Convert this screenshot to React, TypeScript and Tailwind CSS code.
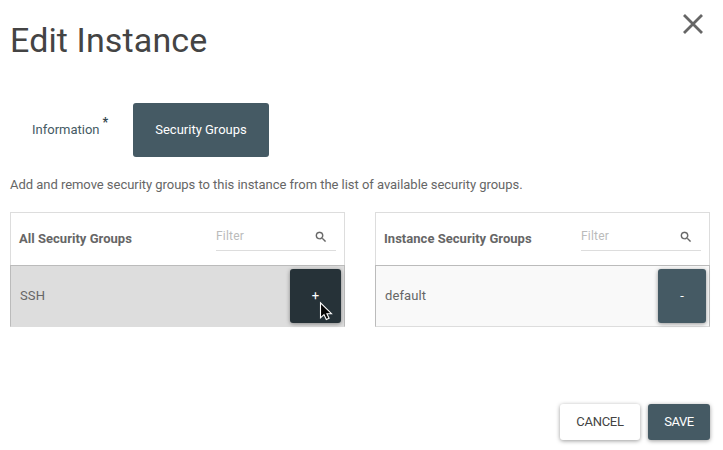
import React from "react";

function SearchIcon() {
  return (
    <svg className="h-[14px] w-[14px]" viewBox="0 0 24 24" fill="#666666" stroke="#666666" strokeWidth="0.4">
      <path d="M15.5 14h-.79l-.28-.27A6.47 6.47 0 0 0 16 9.5 6.5 6.5 0 1 0 9.500 16c1.610 0 3.090-.59 4.230-1.570l.27.280v.790l5 4.990L20.490 19l-4.990-5zm-6 0C7.010 14 5 11.990 5 9.500S7.010 5 9.500 5 14 7.010 14 9.500 11.990 14 9.500 14z" />
    </svg>
  );
}

function CloseIcon() {
  return (
    <svg className="h-[20px] w-[20px]" viewBox="0 0 20 20" fill="none" stroke="#666666" strokeWidth="2.8">
      <path d="M1 1 19 19M19 1 1 19" />
    </svg>
  );
}

function Cursor() {
  return (
    <svg className="absolute left-[29px] top-[32px] h-[22px] w-[15px]" viewBox="0 0 15 22">
      <path d="M1.500 1.800v15l3.500-3.200 2.300 4.900 2.800-1.200-2.200-4.600h4.600z" fill="#050505" stroke="#ffffff" strokeWidth="1.1" />
    </svg>
  );
}

type PanelProps = { title: string; item: string; rowClass: string; children: React.ReactNode };

function Panel({ title, item, rowClass, children }: PanelProps) {
  return (
    <section className="flex h-[115px] w-[335px] flex-col">
      <header className="flex h-[53px] justify-between border border-b-0 border-[#dddddd] pl-2 pr-2">
        <h2 className="pt-[16px] text-[13px] leading-5 font-bold tracking-[0.03px]">{title}</h2>
        <div className="flex h-[38px] w-[120px] justify-between border-b border-[#dddddd] pr-[8px]">
          <span className="pt-[13px] text-[12px] leading-5 tracking-[0.2px] text-[#bbbbbb]">Filter</span>
          <span className="pt-[17px]"><SearchIcon /></span>
        </div>
      </header>
      <div className={`flex h-[62px] justify-between border border-[#bbbbbb] pt-[3px] pr-[3px] pl-[9px] ${rowClass}`}>
        <span className="pt-[17px] text-[13px] leading-5 tracking-[0.1px]">{item}</span>
        {children}
      </div>
    </section>
  );
}

export default function App() {
  return (
    <main className="flex h-[450px] w-[723px] flex-col overflow-hidden bg-white pl-[10px] pr-[13px] font-[Roboto,sans-serif] text-[13px] text-[#666666]">
      <div className="flex h-[103px] justify-between pr-[7px]">
        <h1 className="pt-[20px] text-[34px] leading-[40px] tracking-[0.12px] text-[#444444]">Edit Instance</h1>
        <button className="h-[34px] pt-[14px]" aria-label="Close"><CloseIcon /></button>
      </div>
      <nav className="flex h-[54px] leading-5">
        <button className="flex w-[123px] pl-[22px] pt-[17px] text-[#455a64]">
          Information<span className="-mt-[8px] ml-[3px] text-[12px] font-black text-[#37474f]">*</span>
        </button>
        <button className="w-[136px] rounded-[3px] bg-[#455a64] text-white">Security Groups</button>
      </nav>
      <p className="h-[55px] pt-[18px] leading-5 tracking-[-0.037px]">
        Add and remove security groups to this instance from the list of available security groups.
      </p>
      <div className="flex justify-between">
        <Panel title="All Security Groups" item="SSH" rowClass="bg-[#dddddd] border-b-[#dddddd]">
          <button className="relative h-[54px] w-[51px] rounded-[3px] bg-[#263238] text-white shadow-[0_1px_4px_rgba(0,0,0,0.4)]">
            +<Cursor />
          </button>
        </Panel>
        <Panel title="Instance Security Groups" item="default" rowClass="bg-[#f9f9f9] border-b-[#dddddd]">
          <button className="h-[54px] w-[48px] rounded-[3px] bg-[#455a64] text-white shadow-[0_1px_4px_rgba(0,0,0,0.4)]">-</button>
        </Panel>
      </div>
      <footer className="flex justify-end gap-2 pt-[77px]">
        <button className="h-[36px] w-[80px] rounded-[3px] bg-white tracking-[-0.3px] text-[#444444] shadow-[0_1px_4px_rgba(0,0,0,0.4)]">CANCEL</button>
        <button className="h-[36px] w-[62px] rounded-[3px] bg-[#455a64] tracking-[-0.4px] text-white shadow-[0_1px_4px_rgba(0,0,0,0.4)]">SAVE</button>
      </footer>
    </main>
  );
}
